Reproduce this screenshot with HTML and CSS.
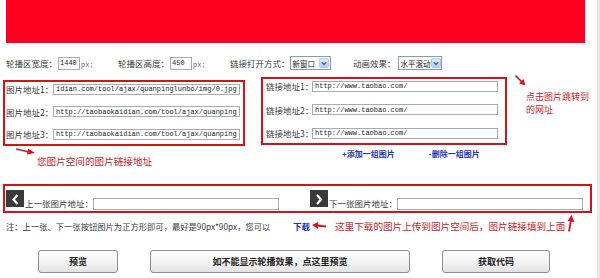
FILE: index.html
```html
<!DOCTYPE html>
<html lang="zh-CN">
<head>
  <meta charset="UTF-8">
  <title>全屏轮播代码生成</title>
  <link rel="stylesheet" href="styles.css">
</head>
<body>
  <div class="page">
    <div class="banner"></div>

    <div class="settings">
      <div class="set-item w112">
        <span class="label">轮播区宽度：</span>
        <input class="num" type="text" value="1440">
        <span class="unit">px;</span>
      </div>
      <div class="set-item w112">
        <span class="label">轮播区高度：</span>
        <input class="num" type="text" value="450">
        <span class="unit">px;</span>
      </div>
      <div class="set-item w123">
        <span class="label">链接打开方式：</span>
        <div class="select sel-open">
          <span>新窗口</span>
          <span class="drop"><svg width="9" height="9" viewBox="0 0 9 9"><polyline points="2,3 4.5,5.5 7,3" fill="none" stroke="#4a5f8c" stroke-width="1.6"/></svg></span>
        </div>
      </div>
      <div class="set-item">
        <span class="label">动画效果：</span>
        <div class="select sel-effect">
          <span>水平滚动</span>
          <span class="drop"><svg width="9" height="9" viewBox="0 0 9 9"><polyline points="2,3 4.5,5.5 7,3" fill="none" stroke="#4a5f8c" stroke-width="1.6"/></svg></span>
        </div>
      </div>
    </div>

    <div class="mid">
      <div class="col-left">
        <div class="box box-img">
          <div class="row">
            <span class="label lw47">图片地址1：</span>
            <input class="url" type="text" value="idian.com/tool/ajax/quanpinglunbo/img/0.jpg">
          </div>
          <div class="row">
            <span class="label lw47">图片地址2：</span>
            <input class="url" type="text" value="http://taobaokaidian.com/tool/ajax/quanpinglunbo/img/1.jpg">
          </div>
          <div class="row">
            <span class="label lw47">图片地址3：</span>
            <input class="url" type="text" value="http://taobaokaidian.com/tool/ajax/quanpinglunbo/img/2.jpg">
          </div>
        </div>
        <svg class="arrow-caption" width="20" height="7" viewBox="0 0 20 7">
          <line x1="0" y1="1" x2="13" y2="4" stroke="#d9141e" stroke-width="1.6"/>
          <polygon points="12,0.5 19,5 11,6.5" fill="#d9141e"/>
        </svg>
        <div class="caption">您图片空间的图片链接地址</div>
      </div>

      <div class="col-right">
        <div class="box box-link">
          <div class="row">
            <span class="label lw46">链接地址1：</span>
            <input class="url" type="text" value="http://www.taobao.com/">
          </div>
          <div class="row">
            <span class="label lw46">链接地址2：</span>
            <input class="url" type="text" value="http://www.taobao.com/">
          </div>
          <div class="row">
            <span class="label lw46">链接地址3：</span>
            <input class="url" type="text" value="http://www.taobao.com/">
          </div>
        </div>
        <div class="links">
          <a class="blue-link">+添加一组图片</a>
          <a class="blue-link del">-删除一组图片</a>
        </div>
      </div>

      <div class="col-note">
        <svg class="arrow-note" width="11" height="11" viewBox="0 0 11 11">
          <line x1="0.5" y1="0.5" x2="7" y2="7" stroke="#d9141e" stroke-width="1.6"/>
          <polygon points="4,8.5 10.5,10.5 8.5,4" fill="#d9141e"/>
        </svg>
        <div class="note-red">点击图片跳转到</div>
        <div class="note-red line2">的网址</div>
      </div>
    </div>

    <div class="box box-nav">
      <div class="nav-half">
        <span class="nav-btn"><svg width="18" height="17" viewBox="0 0 18 17"><polyline points="11.5,5 7.5,9.5 11.5,14" fill="none" stroke="#fff" stroke-width="2.2"/></svg></span>
        <span class="label lw68">上一张图片地址：</span>
        <input class="url nav-input" type="text" value="">
      </div>
      <div class="nav-half next">
        <span class="nav-btn"><svg width="18" height="17" viewBox="0 0 18 17"><polyline points="7,5 11,9.5 7,14" fill="none" stroke="#fff" stroke-width="2.2"/></svg></span>
        <span class="label lw68">下一张图片地址：</span>
        <input class="url nav-input" type="text" value="">
      </div>
    </div>

    <div class="tip">
      <span class="tip-text">注：上一张、下一张按钮图片为正方形即可，最好是90px*90px，您可以</span>
      <a class="blue-link">下载</a>
      <svg class="arrow-left" width="14" height="7" viewBox="0 0 14 7">
        <line x1="5" y1="3.5" x2="14" y2="4.5" stroke="#d9141e" stroke-width="1.8"/>
        <polygon points="0,3 6,0 6,7" fill="#d9141e"/>
      </svg>
      <span class="tip-red">这里下载的图片上传到图片空间后，图片链接填到上面</span>
      <svg class="arrow-up" width="9" height="17" viewBox="0 0 9 17">
        <line x1="3" y1="16.5" x2="5" y2="5" stroke="#d9141e" stroke-width="1.8"/>
        <polygon points="1.5,6 5.5,0 8.5,7" fill="#d9141e"/>
      </svg>
    </div>

    <div class="actions">
      <button class="btn btn-preview">预览</button>
      <button class="btn btn-alt">如不能显示轮播效果，点这里预览</button>
      <button class="btn btn-code">获取代码</button>
    </div>
  </div>
</body>
</html>
```

FILE: styles.css
```css
body {
  margin: 0;
  background: #e8e8e8;
  font-family: "Noto Sans CJK SC", "Noto Sans", sans-serif;
  color: #333;
}

.page {
  width: 597px;
  height: 278px;
  background: #fff;
  padding-left: 3px;
  box-sizing: border-box;
  overflow: hidden;
}

.banner {
  height: 43px;
  width: 579px;
  margin-left: 3px;
  background: #fe0020;
}

.label {
  font-size: 8.5px;
  line-height: 12px;
  color: #3a3a3a;
  white-space: nowrap;
  flex-shrink: 0;
}

/* 设置行 */
.settings {
  display: flex;
  align-items: center;
  height: 14px;
  margin-top: 13px;
  padding-left: 3px;
}

.set-item {
  display: flex;
  align-items: center;
  flex-shrink: 0;
}

.w112 { width: 112px; }
.w123 { width: 123px; }

.num {
  width: 22px;
  height: 13px;
  box-sizing: border-box;
  margin: 0 0 0 1px;
  padding: 0 1px;
  border: 1px solid #a5acb2;
  font-family: "Liberation Mono", monospace;
  font-size: 7px;
  color: #222;
}

.unit {
  font-family: "Liberation Mono", monospace;
  font-size: 7px;
  color: #666;
  margin-left: 1px;
  margin-top: 3px;
}

.select {
  display: flex;
  align-items: center;
  justify-content: space-between;
  height: 14px;
  box-sizing: border-box;
  border: 1px solid #7f9db9;
  padding: 0 1px 0 2px;
  font-size: 7.5px;
  color: #222;
  background: #fff;
  white-space: nowrap;
  flex-shrink: 0;
}

.sel-open { width: 41px; }
.sel-effect { width: 44px; margin-left: 2px; }

.drop {
  display: flex;
  align-items: center;
  justify-content: center;
  width: 10px;
  height: 10px;
  flex-shrink: 0;
  border-radius: 2px;
  background: linear-gradient(#dde8fc, #b9cdf4);
  border: 1px solid #b4c6ea;
  box-sizing: border-box;
}

/* 中间区域 */
.mid {
  display: flex;
  align-items: flex-start;
  height: 92px;
  margin-top: 7px;
}

.box {
  border: 2px solid #d3121c;
}

.row {
  display: flex;
  align-items: center;
  height: 12px;
}

.col-left {
  width: 242px;
  margin-top: 3px;
  flex-shrink: 0;
}

.box-img {
  padding: 1px 3px 4px 1px;
}

.box-img .row + .row { margin-top: 10.5px; }

.lw46 { width: 46px; }
.lw47 { width: 47px; }
.lw68 { width: 68px; }

.url {
  width: 187px;
  height: 11px;
  box-sizing: border-box;
  margin: 0;
  padding: 0 2px;
  border: 1px solid #a5acb2;
  font-family: "Liberation Mono", monospace;
  font-size: 7px;
  color: #222;
  background: #fff;
}

.box-link .url { width: 186px; }

.arrow-caption {
  display: block;
  margin: 2px 0 0 13px;
}

.caption,
.note-red,
.tip-red {
  font-size: 9.6px;
  color: #cc2228;
  line-height: 12px;
  white-space: nowrap;
}

.caption {
  margin: 0 0 0 34px;
}

.col-right {
  width: 246px;
  margin-left: 16px;
  flex-shrink: 0;
}

.box-link {
  padding: 1px 7px 4px 3px;
}

.box-link .row + .row { margin-top: 11.5px; }

.links {
  display: flex;
  margin: 3px 0 0 81px;
}

.blue-link {
  font-size: 8px;
  font-weight: bold;
  color: #2336b0;
  line-height: 12px;
  white-space: nowrap;
}

.links .del { margin-left: 34px; }

.col-note {
  margin-left: 8px;
  margin-top: -2px;
}

.arrow-note {
  display: block;
}

.note-red {
  margin: 4px 0 0 11px;
  font-size: 9px;
  line-height: 13px;
}

.note-red.line2 {
  margin-top: 0;
}

/* 上一张/下一张 */
.box-nav {
  display: flex;
  align-items: flex-end;
  width: 589px;
  height: 29px;
  box-sizing: border-box;
  margin-top: 15px;
  padding: 0 0 1px 1px;
}

.nav-half {
  display: flex;
  align-items: flex-end;
}

.nav-half.next { margin-left: 31px; }

.nav-btn {
  display: block;
  width: 18px;
  height: 17px;
  background: #3a3a3a;
  margin-bottom: 3px;
  flex-shrink: 0;
}

.nav-btn svg { display: block; }

.nav-half .label {
  margin-left: 1px;
  line-height: 11px;
  margin-bottom: 1px;
}

.nav-input {
  width: 186px;
  height: 12px;
}

/* 说明 */
.tip {
  display: flex;
  align-items: flex-end;
  height: 17px;
  margin-top: 2px;
  padding-left: 3px;
}

.tip-text {
  width: 287px;
  font-size: 8.3px;
  line-height: 12px;
  color: #3a3a3a;
  white-space: nowrap;
  flex-shrink: 0;
}

.tip .blue-link {
  font-size: 8.5px;
}

.arrow-left {
  margin: 0 0 3px 2px;
}

.tip-red {
  margin-left: 9px;
}

.arrow-up {
  margin-left: 1px;
}

/* 按钮 */
.actions {
  display: flex;
  margin-top: 18px;
  padding-left: 35px;
}

.btn {
  height: 23px;
  margin: 0 32px 0 0;
  padding: 0;
  border: 1px solid #8e8f8f;
  border-radius: 3px;
  background: linear-gradient(#ffffff, #f1f1f1 60%, #e2e2e2);
  font-family: "Noto Sans CJK SC", sans-serif;
  font-size: 9px;
  font-weight: bold;
  color: #222;
  cursor: pointer;
}

.btn-preview { width: 80px; }
.btn-alt { width: 260px; }
.btn-code { width: 108px; }
```
